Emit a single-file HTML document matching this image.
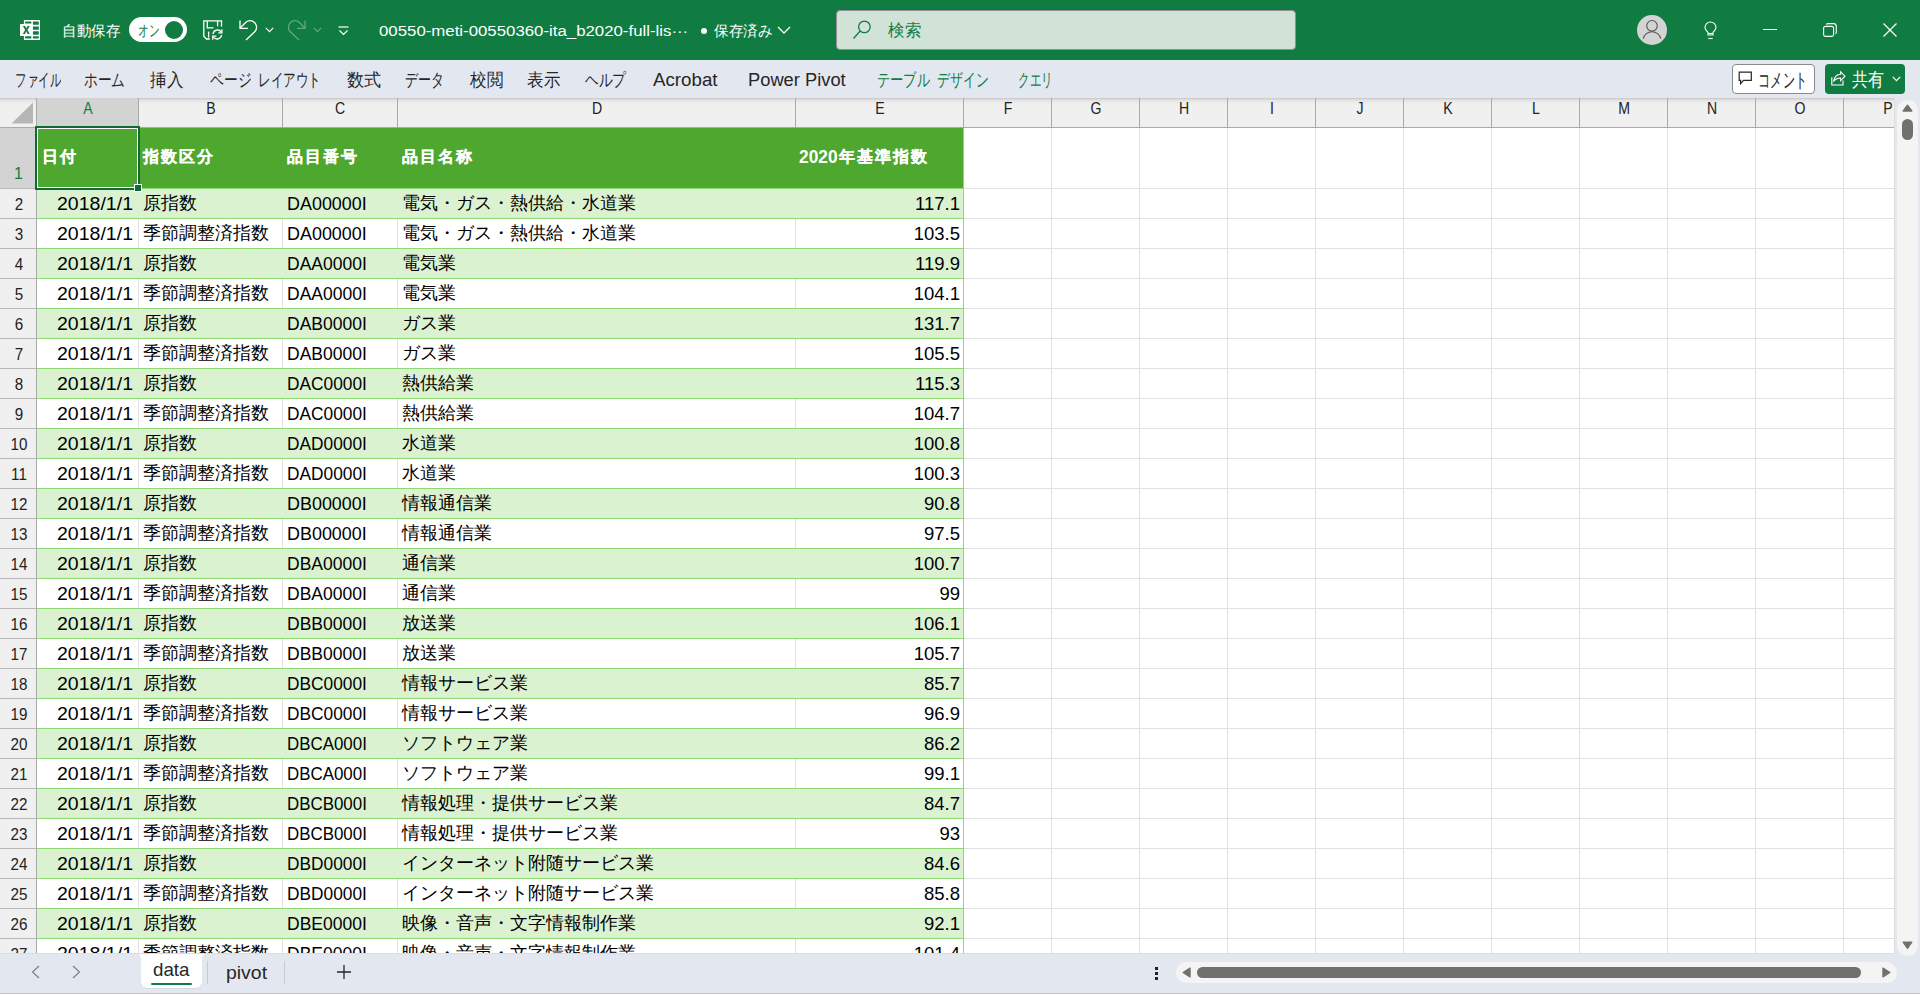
<!DOCTYPE html><html lang="ja"><head><meta charset="utf-8"><style>
html,body{margin:0;padding:0;width:1920px;height:995px;overflow:hidden;background:#fff;font-family:"Liberation Sans",sans-serif;}
.t{position:absolute;line-height:0;white-space:nowrap;}
.r{position:absolute;}
svg{position:absolute;overflow:visible;}
</style></head><body>
<div class="r" style="left:0px;top:0px;width:1920px;height:60px;background:#107C41;"></div>
<svg style="left:20px;top:20px" width="20" height="20" viewBox="0 0 20 20">
<rect x="3.9" y="0" width="16.1" height="20" rx="0.6" fill="#fff"/>
<g fill="#107C41">
<rect x="5.1" y="1.4" width="6.3" height="2.2" rx="0.4"/><rect x="5.1" y="16.3" width="6.3" height="2.2" rx="0.4"/>
<rect x="12.9" y="1.4" width="5.9" height="3.3" rx="0.4"/><rect x="12.9" y="6.4" width="5.9" height="3.4" rx="0.4"/>
<rect x="12.9" y="11.3" width="5.9" height="3.4" rx="0.4"/><rect x="12.9" y="16.3" width="5.9" height="2.2" rx="0.4"/>
</g>
<rect x="0" y="4" width="12.3" height="12" rx="0.5" fill="#fff"/>
<path d="M2.9 6 H5.1 L6.3 8.5 L7.5 6 H9.7 L7.5 9.9 L9.8 13.9 H7.6 L6.3 11.3 L5 13.9 H2.8 L5.1 9.9 Z" fill="#107C41"/>
</svg>
<div class="t" style="left:62.00px;top:30.80px;font-size:15.00px;color:#fff;font-weight:normal;font-family:'Liberation Sans', sans-serif;transform:scaleX(0.9667);transform-origin:left;">自動保存</div>
<div class="r" style="left:129px;top:17px;width:58px;height:25px;background:#fff;border-radius:12.5px;"></div>
<div class="r" style="left:165px;top:21px;width:18px;height:18px;background:#107C41;border-radius:50%;"></div>
<div class="t" style="left:137.50px;top:31.13px;font-size:15.50px;color:#107C41;font-weight:normal;font-family:'Liberation Sans', sans-serif;transform:scaleX(0.6719);transform-origin:left;">オン</div>
<svg style="left:203px;top:20px" width="20" height="20" viewBox="0 0 20 20" fill="none" stroke="#fff" stroke-width="1.3">
<path d="M6.8 19 H3.4 L0.8 16.3 V0.8 H18.5 V6.8"/>
<path d="M4.3 1 V7.9 H10.5"/><path d="M14.6 1 V6.3"/><path d="M5.6 11.6 V17.6"/>
<path d="M10 14 A4.6 4.6 0 0 1 18.2 11.8"/><path d="M18.9 9.3 V12.9 H15.3" stroke-linejoin="miter"/>
<path d="M18.6 15 A4.6 4.6 0 0 1 10.4 17.2"/><path d="M9.7 19.7 V16.1 H13.3" stroke-linejoin="miter"/>
</svg>
<svg style="left:238px;top:20px" width="20" height="21" viewBox="0 0 20 21" fill="none" stroke="#fff" stroke-width="1.35">
<path d="M2 0.4 V8.3 H9.9"/><path d="M2.4 7.9 L7.3 2.8 A6.5 6.5 0 0 1 16.9 11.6 L8 19.9"/>
</svg>
<svg style="left:265px;top:27px" width="9" height="6" viewBox="0 0 9 6" fill="none" stroke="#fff" stroke-width="1.2"><path d="M0.8 0.8 L4.5 4.6 L8.2 0.8"/></svg>
<svg style="left:287px;top:20px" width="20" height="21" viewBox="0 0 20 21" fill="none" stroke="#5FA982" stroke-width="1.35">
<path d="M18 0.4 V8.3 H10.1"/><path d="M17.6 7.9 L12.7 2.8 A6.5 6.5 0 0 0 3.1 11.6 L12 19.9"/>
</svg>
<svg style="left:313px;top:27px" width="9" height="6" viewBox="0 0 9 6" fill="none" stroke="#5FA982" stroke-width="1.2"><path d="M0.8 0.8 L4.5 4.6 L8.2 0.8"/></svg>
<svg style="left:338px;top:26px" width="11" height="10" viewBox="0 0 11 10" fill="none" stroke="#fff" stroke-width="1.2"><path d="M0.5 1 H10.5"/><path d="M1.5 4.5 L5.5 8.5 L9.5 4.5"/></svg>
<div class="t" style="left:379.00px;top:30.83px;font-size:15.50px;color:#fff;font-weight:normal;font-family:'Liberation Sans', sans-serif;transform:scaleX(1.0842);transform-origin:left;">00550-meti-00550360-ita_b2020-full-lis···</div>
<div class="r" style="left:701px;top:27.5px;width:6px;height:6px;background:#fff;border-radius:50%;"></div>
<div class="t" style="left:714.00px;top:30.80px;font-size:15.00px;color:#fff;font-weight:normal;font-family:'Liberation Sans', sans-serif;transform:scaleX(0.9667);transform-origin:left;">保存済み</div>
<svg style="left:777px;top:26px" width="14" height="8" viewBox="0 0 14 8" fill="none" stroke="#fff" stroke-width="1.3"><path d="M1 1 L7 7 L13 1"/></svg>
<div class="r" style="left:836px;top:10px;width:460px;height:40px;background:#D1E3D7;box-sizing:border-box;border:1px solid #938C99;border-radius:4px;"></div>
<svg style="left:852px;top:20px" width="20" height="20" viewBox="0 0 20 20" fill="none" stroke="#107C41" stroke-width="1.3"><circle cx="12.4" cy="6.9" r="5.8"/><path d="M8.2 11 L1.5 18.5"/></svg>
<div class="t" style="left:888.00px;top:30.28px;font-size:16.50px;color:#107C41;font-weight:normal;font-family:'Liberation Sans', sans-serif;transform:scaleX(0.9706);transform-origin:left;">検索</div>
<div class="r" style="left:1637px;top:15px;width:30px;height:30px;background:#D4D4D4;border-radius:50%;"></div>
<svg style="left:1642px;top:20px" width="20" height="20" viewBox="0 0 20 20" fill="none" stroke="#555" stroke-width="1.1"><circle cx="10" cy="5.8" r="5.3"/><path d="M1.3 18.7 A8.9 8.9 0 0 1 18.7 18.7"/></svg>
<svg style="left:1704px;top:22px" width="13" height="18" viewBox="0 0 13 18" fill="none" stroke="#fff" stroke-width="1.1"><path d="M4 13 V10.6 C3 9 1 7.8 1 5.5 A5.5 5.5 0 0 1 12 5.5 C12 7.8 10 9 9 10.6 V13 Z"/><path d="M4.3 16.5 H8.7"/><path d="M4.2 11.5 H8.8"/></svg>
<div class="r" style="left:1763px;top:28.5px;width:14px;height:1.3px;background:#fff;"></div>
<svg style="left:1823px;top:23px" width="14" height="14" viewBox="0 0 14 14" fill="none" stroke="#fff" stroke-width="1.1"><rect x="0.6" y="3.4" width="10" height="10" rx="1.8"/><path d="M3.2 1.5 C3.7 0.9 4.3 0.6 5 0.6 H10.5 A2.8 2.8 0 0 1 13.3 3.4 V9 C13.3 9.7 13 10.3 12.5 10.8"/></svg>
<svg style="left:1883px;top:23px" width="14" height="14" viewBox="0 0 14 14" fill="none" stroke="#fff" stroke-width="1.2"><path d="M0.5 0.5 L13.5 13.5 M13.5 0.5 L0.5 13.5"/></svg>
<div class="r" style="left:0px;top:60px;width:1920px;height:38px;background:#E3E8F0;"></div>
<div class="t" style="left:15.00px;top:80.26px;font-size:18.00px;color:#262626;font-weight:normal;font-family:'Liberation Sans', sans-serif;transform:scaleX(0.6389);transform-origin:left;">ファイル</div>
<div class="t" style="left:84.00px;top:80.26px;font-size:18.00px;color:#262626;font-weight:normal;font-family:'Liberation Sans', sans-serif;transform:scaleX(0.7593);transform-origin:left;">ホーム</div>
<div class="t" style="left:150.00px;top:80.26px;font-size:18.00px;color:#262626;font-weight:normal;font-family:'Liberation Sans', sans-serif;transform:scaleX(0.9167);transform-origin:left;">挿入</div>
<div class="t" style="left:210.00px;top:80.26px;font-size:18.00px;color:#262626;font-weight:normal;font-family:'Liberation Sans', sans-serif;transform:scaleX(0.7639);transform-origin:left;">ページ</div>
<div class="t" style="left:258.00px;top:80.26px;font-size:18.00px;color:#262626;font-weight:normal;font-family:'Liberation Sans', sans-serif;transform:scaleX(0.7000);transform-origin:left;">レイアウト</div>
<div class="t" style="left:347.00px;top:80.26px;font-size:18.00px;color:#262626;font-weight:normal;font-family:'Liberation Sans', sans-serif;transform:scaleX(0.9444);transform-origin:left;">数式</div>
<div class="t" style="left:405.00px;top:80.26px;font-size:18.00px;color:#262626;font-weight:normal;font-family:'Liberation Sans', sans-serif;transform:scaleX(0.7222);transform-origin:left;">データ</div>
<div class="t" style="left:470.00px;top:80.26px;font-size:18.00px;color:#262626;font-weight:normal;font-family:'Liberation Sans', sans-serif;transform:scaleX(0.9167);transform-origin:left;">校閲</div>
<div class="t" style="left:527.00px;top:80.26px;font-size:18.00px;color:#262626;font-weight:normal;font-family:'Liberation Sans', sans-serif;transform:scaleX(0.9167);transform-origin:left;">表示</div>
<div class="t" style="left:585.00px;top:80.26px;font-size:18.00px;color:#262626;font-weight:normal;font-family:'Liberation Sans', sans-serif;transform:scaleX(0.7593);transform-origin:left;">ヘルプ</div>
<div class="t" style="left:653.00px;top:80.26px;font-size:18.00px;color:#262626;font-weight:normal;font-family:'Liberation Sans', sans-serif;transform:scaleX(1.0403);transform-origin:left;">Acrobat</div>
<div class="t" style="left:748.00px;top:80.26px;font-size:18.00px;color:#262626;font-weight:normal;font-family:'Liberation Sans', sans-serif;transform:scaleX(1.0167);transform-origin:left;">Power Pivot</div>
<div class="t" style="left:877.00px;top:80.26px;font-size:18.00px;color:#107C41;font-weight:normal;font-family:'Liberation Sans', sans-serif;transform:scaleX(0.7361);transform-origin:left;">テーブル</div>
<div class="t" style="left:937.00px;top:80.26px;font-size:18.00px;color:#107C41;font-weight:normal;font-family:'Liberation Sans', sans-serif;transform:scaleX(0.7188);transform-origin:left;">デザイン</div>
<div class="t" style="left:1018.00px;top:80.26px;font-size:18.00px;color:#107C41;font-weight:normal;font-family:'Liberation Sans', sans-serif;transform:scaleX(0.6389);transform-origin:left;">クエリ</div>
<div class="r" style="left:1732px;top:64px;width:83px;height:30px;background:#fff;box-sizing:border-box;border:1px solid #8A8A8A;border-radius:4px;"></div>
<svg style="left:1738px;top:71px" width="15" height="15" viewBox="0 0 15 15" fill="none" stroke="#262626" stroke-width="1.2"><path d="M1.2 1.2 H13.3 V9.3 H5.5 L2.6 12.6 V9.3 H1.2 Z"/></svg>
<div class="t" style="left:1758.00px;top:79.74px;font-size:19.50px;color:#262626;font-weight:normal;font-family:'Liberation Sans', sans-serif;transform:scaleX(0.6125);transform-origin:left;">コメント</div>
<div class="r" style="left:1825px;top:64px;width:80px;height:30px;background:#107C41;border-radius:4px;"></div>
<svg style="left:1831px;top:71px" width="15" height="15" viewBox="0 0 15 15" fill="none" stroke="#fff" stroke-width="1.1" stroke-linejoin="miter"><path d="M0.8 6.3 V14 H12 V9.6"/><path d="M2.8 9.8 C3.5 5.5 6 3.5 9.6 3.3 V0.8 L14 5.2 L9.6 9.6 V7 C6.5 7 4.5 8 2.8 9.8 Z"/></svg>
<div class="t" style="left:1852.00px;top:80.39px;font-size:18.50px;color:#fff;font-weight:normal;font-family:'Liberation Sans', sans-serif;transform:scaleX(0.8421);transform-origin:left;">共有</div>
<svg style="left:1892px;top:76px" width="9" height="6" viewBox="0 0 9 6" fill="none" stroke="#fff" stroke-width="1.2"><path d="M0.8 0.8 L4.5 4.6 L8.2 0.8"/></svg>
<div class="r" style="left:0px;top:98px;width:1894px;height:30px;background:#F0F0F0;"></div>
<div class="r" style="left:0px;top:98px;width:1894px;height:6px;background:linear-gradient(#C8C8C8,#E4E4E4 40%,#F0F0F0);"></div>
<div class="r" style="left:37px;top:98px;width:101px;height:29px;background:#D3D3D3;"></div>
<div class="r" style="left:0px;top:127px;width:1894px;height:1px;background:#A9A9A9;"></div>
<svg style="left:11px;top:102px" width="23" height="22" viewBox="0 0 23 22"><path d="M0.5 21.5 L22 21.5 L22 0.5 Z" fill="#B6B6B6"/></svg>
<div class="r" style="left:36px;top:98px;width:1px;height:30px;background:#A9A9A9;"></div>
<div class="r" style="left:138px;top:98px;width:1px;height:29px;background:#A9A9A9;"></div>
<div class="r" style="left:282px;top:98px;width:1px;height:29px;background:#A9A9A9;"></div>
<div class="r" style="left:397px;top:98px;width:1px;height:29px;background:#A9A9A9;"></div>
<div class="r" style="left:795px;top:98px;width:1px;height:29px;background:#A9A9A9;"></div>
<div class="r" style="left:963px;top:98px;width:1px;height:29px;background:#A9A9A9;"></div>
<div class="r" style="left:1051px;top:98px;width:1px;height:29px;background:#A9A9A9;"></div>
<div class="r" style="left:1139px;top:98px;width:1px;height:29px;background:#A9A9A9;"></div>
<div class="r" style="left:1227px;top:98px;width:1px;height:29px;background:#A9A9A9;"></div>
<div class="r" style="left:1315px;top:98px;width:1px;height:29px;background:#A9A9A9;"></div>
<div class="r" style="left:1403px;top:98px;width:1px;height:29px;background:#A9A9A9;"></div>
<div class="r" style="left:1491px;top:98px;width:1px;height:29px;background:#A9A9A9;"></div>
<div class="r" style="left:1579px;top:98px;width:1px;height:29px;background:#A9A9A9;"></div>
<div class="r" style="left:1667px;top:98px;width:1px;height:29px;background:#A9A9A9;"></div>
<div class="r" style="left:1755px;top:98px;width:1px;height:29px;background:#A9A9A9;"></div>
<div class="r" style="left:1843px;top:98px;width:1px;height:29px;background:#A9A9A9;"></div>
<div class="r" style="left:1931px;top:98px;width:1px;height:29px;background:#A9A9A9;"></div>
<div class="t" style="left:87.50px;top:109.46px;font-size:16.00px;color:#107C41;font-weight:normal;font-family:'Liberation Sans', sans-serif;transform:translateX(-50%) scaleX(0.880);">A</div>
<div class="t" style="left:210.50px;top:109.46px;font-size:16.00px;color:#222;font-weight:normal;font-family:'Liberation Sans', sans-serif;transform:translateX(-50%) scaleX(0.880);">B</div>
<div class="t" style="left:340.00px;top:109.46px;font-size:16.00px;color:#222;font-weight:normal;font-family:'Liberation Sans', sans-serif;transform:translateX(-50%) scaleX(0.880);">C</div>
<div class="t" style="left:596.50px;top:109.46px;font-size:16.00px;color:#222;font-weight:normal;font-family:'Liberation Sans', sans-serif;transform:translateX(-50%) scaleX(0.880);">D</div>
<div class="t" style="left:879.50px;top:109.46px;font-size:16.00px;color:#222;font-weight:normal;font-family:'Liberation Sans', sans-serif;transform:translateX(-50%) scaleX(0.880);">E</div>
<div class="t" style="left:1007.50px;top:109.46px;font-size:16.00px;color:#222;font-weight:normal;font-family:'Liberation Sans', sans-serif;transform:translateX(-50%) scaleX(0.880);">F</div>
<div class="t" style="left:1095.50px;top:109.46px;font-size:16.00px;color:#222;font-weight:normal;font-family:'Liberation Sans', sans-serif;transform:translateX(-50%) scaleX(0.880);">G</div>
<div class="t" style="left:1183.50px;top:109.46px;font-size:16.00px;color:#222;font-weight:normal;font-family:'Liberation Sans', sans-serif;transform:translateX(-50%) scaleX(0.880);">H</div>
<div class="t" style="left:1271.50px;top:109.46px;font-size:16.00px;color:#222;font-weight:normal;font-family:'Liberation Sans', sans-serif;transform:translateX(-50%) scaleX(0.880);">I</div>
<div class="t" style="left:1359.50px;top:109.46px;font-size:16.00px;color:#222;font-weight:normal;font-family:'Liberation Sans', sans-serif;transform:translateX(-50%) scaleX(0.880);">J</div>
<div class="t" style="left:1447.50px;top:109.46px;font-size:16.00px;color:#222;font-weight:normal;font-family:'Liberation Sans', sans-serif;transform:translateX(-50%) scaleX(0.880);">K</div>
<div class="t" style="left:1535.50px;top:109.46px;font-size:16.00px;color:#222;font-weight:normal;font-family:'Liberation Sans', sans-serif;transform:translateX(-50%) scaleX(0.880);">L</div>
<div class="t" style="left:1623.50px;top:109.46px;font-size:16.00px;color:#222;font-weight:normal;font-family:'Liberation Sans', sans-serif;transform:translateX(-50%) scaleX(0.880);">M</div>
<div class="t" style="left:1711.50px;top:109.46px;font-size:16.00px;color:#222;font-weight:normal;font-family:'Liberation Sans', sans-serif;transform:translateX(-50%) scaleX(0.880);">N</div>
<div class="t" style="left:1799.50px;top:109.46px;font-size:16.00px;color:#222;font-weight:normal;font-family:'Liberation Sans', sans-serif;transform:translateX(-50%) scaleX(0.880);">O</div>
<div class="t" style="left:1887.50px;top:109.46px;font-size:16.00px;color:#222;font-weight:normal;font-family:'Liberation Sans', sans-serif;transform:translateX(-50%) scaleX(0.880);">P</div>
<div class="r" style="left:0px;top:128px;width:36px;height:825px;background:#F0F0F0;"></div>
<div class="r" style="left:36px;top:128px;width:1px;height:825px;background:#A9A9A9;"></div>
<div class="r" style="left:0px;top:128px;width:36px;height:60px;background:#D3D3D3;"></div>
<div class="r" style="left:0px;top:188px;width:36px;height:1px;background:#B8B8B8;"></div>
<div class="r" style="left:0px;top:218px;width:36px;height:1px;background:#B8B8B8;"></div>
<div class="r" style="left:0px;top:248px;width:36px;height:1px;background:#B8B8B8;"></div>
<div class="r" style="left:0px;top:278px;width:36px;height:1px;background:#B8B8B8;"></div>
<div class="r" style="left:0px;top:308px;width:36px;height:1px;background:#B8B8B8;"></div>
<div class="r" style="left:0px;top:338px;width:36px;height:1px;background:#B8B8B8;"></div>
<div class="r" style="left:0px;top:368px;width:36px;height:1px;background:#B8B8B8;"></div>
<div class="r" style="left:0px;top:398px;width:36px;height:1px;background:#B8B8B8;"></div>
<div class="r" style="left:0px;top:428px;width:36px;height:1px;background:#B8B8B8;"></div>
<div class="r" style="left:0px;top:458px;width:36px;height:1px;background:#B8B8B8;"></div>
<div class="r" style="left:0px;top:488px;width:36px;height:1px;background:#B8B8B8;"></div>
<div class="r" style="left:0px;top:518px;width:36px;height:1px;background:#B8B8B8;"></div>
<div class="r" style="left:0px;top:548px;width:36px;height:1px;background:#B8B8B8;"></div>
<div class="r" style="left:0px;top:578px;width:36px;height:1px;background:#B8B8B8;"></div>
<div class="r" style="left:0px;top:608px;width:36px;height:1px;background:#B8B8B8;"></div>
<div class="r" style="left:0px;top:638px;width:36px;height:1px;background:#B8B8B8;"></div>
<div class="r" style="left:0px;top:668px;width:36px;height:1px;background:#B8B8B8;"></div>
<div class="r" style="left:0px;top:698px;width:36px;height:1px;background:#B8B8B8;"></div>
<div class="r" style="left:0px;top:728px;width:36px;height:1px;background:#B8B8B8;"></div>
<div class="r" style="left:0px;top:758px;width:36px;height:1px;background:#B8B8B8;"></div>
<div class="r" style="left:0px;top:788px;width:36px;height:1px;background:#B8B8B8;"></div>
<div class="r" style="left:0px;top:818px;width:36px;height:1px;background:#B8B8B8;"></div>
<div class="r" style="left:0px;top:848px;width:36px;height:1px;background:#B8B8B8;"></div>
<div class="r" style="left:0px;top:878px;width:36px;height:1px;background:#B8B8B8;"></div>
<div class="r" style="left:0px;top:908px;width:36px;height:1px;background:#B8B8B8;"></div>
<div class="r" style="left:0px;top:938px;width:36px;height:1px;background:#B8B8B8;"></div>
<div class="t" style="left:18.50px;top:174.06px;font-size:16.00px;color:#107C41;font-weight:normal;font-family:'Liberation Sans', sans-serif;transform:translateX(-50%) scaleX(1.000);">1</div>
<div class="t" style="left:18.70px;top:204.66px;font-size:16.00px;color:#222;font-weight:normal;font-family:'Liberation Sans', sans-serif;transform:translateX(-50%) scaleX(0.950);">2</div>
<div class="t" style="left:18.70px;top:234.66px;font-size:16.00px;color:#222;font-weight:normal;font-family:'Liberation Sans', sans-serif;transform:translateX(-50%) scaleX(0.950);">3</div>
<div class="t" style="left:18.70px;top:264.66px;font-size:16.00px;color:#222;font-weight:normal;font-family:'Liberation Sans', sans-serif;transform:translateX(-50%) scaleX(0.950);">4</div>
<div class="t" style="left:18.70px;top:294.66px;font-size:16.00px;color:#222;font-weight:normal;font-family:'Liberation Sans', sans-serif;transform:translateX(-50%) scaleX(0.950);">5</div>
<div class="t" style="left:18.70px;top:324.66px;font-size:16.00px;color:#222;font-weight:normal;font-family:'Liberation Sans', sans-serif;transform:translateX(-50%) scaleX(0.950);">6</div>
<div class="t" style="left:18.70px;top:354.66px;font-size:16.00px;color:#222;font-weight:normal;font-family:'Liberation Sans', sans-serif;transform:translateX(-50%) scaleX(0.950);">7</div>
<div class="t" style="left:18.70px;top:384.66px;font-size:16.00px;color:#222;font-weight:normal;font-family:'Liberation Sans', sans-serif;transform:translateX(-50%) scaleX(0.950);">8</div>
<div class="t" style="left:18.70px;top:414.66px;font-size:16.00px;color:#222;font-weight:normal;font-family:'Liberation Sans', sans-serif;transform:translateX(-50%) scaleX(0.950);">9</div>
<div class="t" style="left:18.70px;top:444.66px;font-size:16.00px;color:#222;font-weight:normal;font-family:'Liberation Sans', sans-serif;transform:translateX(-50%) scaleX(0.950);">10</div>
<div class="t" style="left:18.70px;top:474.66px;font-size:16.00px;color:#222;font-weight:normal;font-family:'Liberation Sans', sans-serif;transform:translateX(-50%) scaleX(0.950);">11</div>
<div class="t" style="left:18.70px;top:504.66px;font-size:16.00px;color:#222;font-weight:normal;font-family:'Liberation Sans', sans-serif;transform:translateX(-50%) scaleX(0.950);">12</div>
<div class="t" style="left:18.70px;top:534.66px;font-size:16.00px;color:#222;font-weight:normal;font-family:'Liberation Sans', sans-serif;transform:translateX(-50%) scaleX(0.950);">13</div>
<div class="t" style="left:18.70px;top:564.66px;font-size:16.00px;color:#222;font-weight:normal;font-family:'Liberation Sans', sans-serif;transform:translateX(-50%) scaleX(0.950);">14</div>
<div class="t" style="left:18.70px;top:594.66px;font-size:16.00px;color:#222;font-weight:normal;font-family:'Liberation Sans', sans-serif;transform:translateX(-50%) scaleX(0.950);">15</div>
<div class="t" style="left:18.70px;top:624.66px;font-size:16.00px;color:#222;font-weight:normal;font-family:'Liberation Sans', sans-serif;transform:translateX(-50%) scaleX(0.950);">16</div>
<div class="t" style="left:18.70px;top:654.66px;font-size:16.00px;color:#222;font-weight:normal;font-family:'Liberation Sans', sans-serif;transform:translateX(-50%) scaleX(0.950);">17</div>
<div class="t" style="left:18.70px;top:684.66px;font-size:16.00px;color:#222;font-weight:normal;font-family:'Liberation Sans', sans-serif;transform:translateX(-50%) scaleX(0.950);">18</div>
<div class="t" style="left:18.70px;top:714.66px;font-size:16.00px;color:#222;font-weight:normal;font-family:'Liberation Sans', sans-serif;transform:translateX(-50%) scaleX(0.950);">19</div>
<div class="t" style="left:18.70px;top:744.66px;font-size:16.00px;color:#222;font-weight:normal;font-family:'Liberation Sans', sans-serif;transform:translateX(-50%) scaleX(0.950);">20</div>
<div class="t" style="left:18.70px;top:774.66px;font-size:16.00px;color:#222;font-weight:normal;font-family:'Liberation Sans', sans-serif;transform:translateX(-50%) scaleX(0.950);">21</div>
<div class="t" style="left:18.70px;top:804.66px;font-size:16.00px;color:#222;font-weight:normal;font-family:'Liberation Sans', sans-serif;transform:translateX(-50%) scaleX(0.950);">22</div>
<div class="t" style="left:18.70px;top:834.66px;font-size:16.00px;color:#222;font-weight:normal;font-family:'Liberation Sans', sans-serif;transform:translateX(-50%) scaleX(0.950);">23</div>
<div class="t" style="left:18.70px;top:864.66px;font-size:16.00px;color:#222;font-weight:normal;font-family:'Liberation Sans', sans-serif;transform:translateX(-50%) scaleX(0.950);">24</div>
<div class="t" style="left:18.70px;top:894.66px;font-size:16.00px;color:#222;font-weight:normal;font-family:'Liberation Sans', sans-serif;transform:translateX(-50%) scaleX(0.950);">25</div>
<div class="t" style="left:18.70px;top:924.66px;font-size:16.00px;color:#222;font-weight:normal;font-family:'Liberation Sans', sans-serif;transform:translateX(-50%) scaleX(0.950);">26</div>
<div class="t" style="left:18.70px;top:954.66px;font-size:16.00px;color:#222;font-weight:normal;font-family:'Liberation Sans', sans-serif;transform:translateX(-50%) scaleX(0.950);">27</div>
<div class="r" style="left:37px;top:128px;width:1857px;height:825px;background:#fff;"></div>
<div class="r" style="left:37px;top:188px;width:1857px;height:1px;background:#E1E1E1;"></div>
<div class="r" style="left:37px;top:218px;width:1857px;height:1px;background:#E1E1E1;"></div>
<div class="r" style="left:37px;top:248px;width:1857px;height:1px;background:#E1E1E1;"></div>
<div class="r" style="left:37px;top:278px;width:1857px;height:1px;background:#E1E1E1;"></div>
<div class="r" style="left:37px;top:308px;width:1857px;height:1px;background:#E1E1E1;"></div>
<div class="r" style="left:37px;top:338px;width:1857px;height:1px;background:#E1E1E1;"></div>
<div class="r" style="left:37px;top:368px;width:1857px;height:1px;background:#E1E1E1;"></div>
<div class="r" style="left:37px;top:398px;width:1857px;height:1px;background:#E1E1E1;"></div>
<div class="r" style="left:37px;top:428px;width:1857px;height:1px;background:#E1E1E1;"></div>
<div class="r" style="left:37px;top:458px;width:1857px;height:1px;background:#E1E1E1;"></div>
<div class="r" style="left:37px;top:488px;width:1857px;height:1px;background:#E1E1E1;"></div>
<div class="r" style="left:37px;top:518px;width:1857px;height:1px;background:#E1E1E1;"></div>
<div class="r" style="left:37px;top:548px;width:1857px;height:1px;background:#E1E1E1;"></div>
<div class="r" style="left:37px;top:578px;width:1857px;height:1px;background:#E1E1E1;"></div>
<div class="r" style="left:37px;top:608px;width:1857px;height:1px;background:#E1E1E1;"></div>
<div class="r" style="left:37px;top:638px;width:1857px;height:1px;background:#E1E1E1;"></div>
<div class="r" style="left:37px;top:668px;width:1857px;height:1px;background:#E1E1E1;"></div>
<div class="r" style="left:37px;top:698px;width:1857px;height:1px;background:#E1E1E1;"></div>
<div class="r" style="left:37px;top:728px;width:1857px;height:1px;background:#E1E1E1;"></div>
<div class="r" style="left:37px;top:758px;width:1857px;height:1px;background:#E1E1E1;"></div>
<div class="r" style="left:37px;top:788px;width:1857px;height:1px;background:#E1E1E1;"></div>
<div class="r" style="left:37px;top:818px;width:1857px;height:1px;background:#E1E1E1;"></div>
<div class="r" style="left:37px;top:848px;width:1857px;height:1px;background:#E1E1E1;"></div>
<div class="r" style="left:37px;top:878px;width:1857px;height:1px;background:#E1E1E1;"></div>
<div class="r" style="left:37px;top:908px;width:1857px;height:1px;background:#E1E1E1;"></div>
<div class="r" style="left:37px;top:938px;width:1857px;height:1px;background:#E1E1E1;"></div>
<div class="r" style="left:138px;top:128px;width:1px;height:825px;background:#E1E1E1;"></div>
<div class="r" style="left:282px;top:128px;width:1px;height:825px;background:#E1E1E1;"></div>
<div class="r" style="left:397px;top:128px;width:1px;height:825px;background:#E1E1E1;"></div>
<div class="r" style="left:795px;top:128px;width:1px;height:825px;background:#E1E1E1;"></div>
<div class="r" style="left:963px;top:128px;width:1px;height:825px;background:#E1E1E1;"></div>
<div class="r" style="left:1051px;top:128px;width:1px;height:825px;background:#E1E1E1;"></div>
<div class="r" style="left:1139px;top:128px;width:1px;height:825px;background:#E1E1E1;"></div>
<div class="r" style="left:1227px;top:128px;width:1px;height:825px;background:#E1E1E1;"></div>
<div class="r" style="left:1315px;top:128px;width:1px;height:825px;background:#E1E1E1;"></div>
<div class="r" style="left:1403px;top:128px;width:1px;height:825px;background:#E1E1E1;"></div>
<div class="r" style="left:1491px;top:128px;width:1px;height:825px;background:#E1E1E1;"></div>
<div class="r" style="left:1579px;top:128px;width:1px;height:825px;background:#E1E1E1;"></div>
<div class="r" style="left:1667px;top:128px;width:1px;height:825px;background:#E1E1E1;"></div>
<div class="r" style="left:1755px;top:128px;width:1px;height:825px;background:#E1E1E1;"></div>
<div class="r" style="left:1843px;top:128px;width:1px;height:825px;background:#E1E1E1;"></div>
<div class="r" style="left:37px;top:128px;width:926px;height:60px;background:#4EA72E;"></div>
<div class="r" style="left:37px;top:188px;width:926px;height:30px;background:#DAF2D0;"></div>
<div class="r" style="left:37px;top:188px;width:927px;height:1px;background:#8ED973;"></div>
<div class="r" style="left:37px;top:218px;width:927px;height:1px;background:#8ED973;"></div>
<div class="r" style="left:37px;top:248px;width:926px;height:30px;background:#DAF2D0;"></div>
<div class="r" style="left:37px;top:248px;width:927px;height:1px;background:#8ED973;"></div>
<div class="r" style="left:37px;top:278px;width:927px;height:1px;background:#8ED973;"></div>
<div class="r" style="left:37px;top:308px;width:926px;height:30px;background:#DAF2D0;"></div>
<div class="r" style="left:37px;top:308px;width:927px;height:1px;background:#8ED973;"></div>
<div class="r" style="left:37px;top:338px;width:927px;height:1px;background:#8ED973;"></div>
<div class="r" style="left:37px;top:368px;width:926px;height:30px;background:#DAF2D0;"></div>
<div class="r" style="left:37px;top:368px;width:927px;height:1px;background:#8ED973;"></div>
<div class="r" style="left:37px;top:398px;width:927px;height:1px;background:#8ED973;"></div>
<div class="r" style="left:37px;top:428px;width:926px;height:30px;background:#DAF2D0;"></div>
<div class="r" style="left:37px;top:428px;width:927px;height:1px;background:#8ED973;"></div>
<div class="r" style="left:37px;top:458px;width:927px;height:1px;background:#8ED973;"></div>
<div class="r" style="left:37px;top:488px;width:926px;height:30px;background:#DAF2D0;"></div>
<div class="r" style="left:37px;top:488px;width:927px;height:1px;background:#8ED973;"></div>
<div class="r" style="left:37px;top:518px;width:927px;height:1px;background:#8ED973;"></div>
<div class="r" style="left:37px;top:548px;width:926px;height:30px;background:#DAF2D0;"></div>
<div class="r" style="left:37px;top:548px;width:927px;height:1px;background:#8ED973;"></div>
<div class="r" style="left:37px;top:578px;width:927px;height:1px;background:#8ED973;"></div>
<div class="r" style="left:37px;top:608px;width:926px;height:30px;background:#DAF2D0;"></div>
<div class="r" style="left:37px;top:608px;width:927px;height:1px;background:#8ED973;"></div>
<div class="r" style="left:37px;top:638px;width:927px;height:1px;background:#8ED973;"></div>
<div class="r" style="left:37px;top:668px;width:926px;height:30px;background:#DAF2D0;"></div>
<div class="r" style="left:37px;top:668px;width:927px;height:1px;background:#8ED973;"></div>
<div class="r" style="left:37px;top:698px;width:927px;height:1px;background:#8ED973;"></div>
<div class="r" style="left:37px;top:728px;width:926px;height:30px;background:#DAF2D0;"></div>
<div class="r" style="left:37px;top:728px;width:927px;height:1px;background:#8ED973;"></div>
<div class="r" style="left:37px;top:758px;width:927px;height:1px;background:#8ED973;"></div>
<div class="r" style="left:37px;top:788px;width:926px;height:30px;background:#DAF2D0;"></div>
<div class="r" style="left:37px;top:788px;width:927px;height:1px;background:#8ED973;"></div>
<div class="r" style="left:37px;top:818px;width:927px;height:1px;background:#8ED973;"></div>
<div class="r" style="left:37px;top:848px;width:926px;height:30px;background:#DAF2D0;"></div>
<div class="r" style="left:37px;top:848px;width:927px;height:1px;background:#8ED973;"></div>
<div class="r" style="left:37px;top:878px;width:927px;height:1px;background:#8ED973;"></div>
<div class="r" style="left:37px;top:908px;width:926px;height:30px;background:#DAF2D0;"></div>
<div class="r" style="left:37px;top:908px;width:927px;height:1px;background:#8ED973;"></div>
<div class="r" style="left:37px;top:938px;width:927px;height:1px;background:#8ED973;"></div>
<div class="r" style="left:963px;top:128px;width:1px;height:825px;background:#8ED973;"></div>
<div class="t" style="left:42.25px;top:157.46px;font-size:16.00px;color:#fff;font-weight:bold;font-family:'Liberation Sans', sans-serif;-webkit-text-stroke:0.2px #fff;letter-spacing:2px;">日付</div>
<div class="t" style="left:143.00px;top:157.46px;font-size:16.00px;color:#fff;font-weight:bold;font-family:'Liberation Sans', sans-serif;-webkit-text-stroke:0.2px #fff;letter-spacing:2px;">指数区分</div>
<div class="t" style="left:287.25px;top:157.46px;font-size:16.00px;color:#fff;font-weight:bold;font-family:'Liberation Sans', sans-serif;-webkit-text-stroke:0.2px #fff;letter-spacing:2px;">品目番号</div>
<div class="t" style="left:402.25px;top:157.46px;font-size:16.00px;color:#fff;font-weight:bold;font-family:'Liberation Sans', sans-serif;-webkit-text-stroke:0.2px #fff;letter-spacing:2px;">品目名称</div>
<div class="t" style="left:799.30px;top:157.26px;font-size:18.00px;color:#fff;font-weight:bold;font-family:'Liberation Sans', sans-serif;transform:scaleX(0.9625);transform-origin:left;">2020</div>
<div class="t" style="left:838.50px;top:157.46px;font-size:16.00px;color:#fff;font-weight:bold;font-family:'Liberation Sans', sans-serif;-webkit-text-stroke:0.2px #fff;letter-spacing:2px;">年基準指数</div>
<div style="position:absolute;left:0;top:0;width:1894px;height:953px;overflow:hidden">
<div class="t" style="right:1760.50px;top:203.59px;font-size:18.50px;color:#000;font-weight:normal;font-family:'Liberation Sans', sans-serif;transform:scaleX(1.0556);transform-origin:right;">2018/1/1</div>
<div class="t" style="left:143.00px;top:203.30px;font-size:17.90px;color:#000;font-weight:normal;font-family:'Liberation Sans', sans-serif;">原指数</div>
<div class="t" style="left:287.25px;top:203.59px;font-size:18.50px;color:#000;font-weight:normal;font-family:'Liberation Sans', sans-serif;transform:scaleX(0.9695);transform-origin:left;">DA00000I</div>
<div class="t" style="left:402.25px;top:203.30px;font-size:17.90px;color:#000;font-weight:normal;font-family:'Liberation Sans', sans-serif;">電気・ガス・熱供給・水道業</div>
<div class="t" style="right:934.00px;top:203.59px;font-size:18.50px;color:#000;font-weight:normal;font-family:'Liberation Sans', sans-serif;">117.1</div>
<div class="t" style="right:1760.50px;top:233.59px;font-size:18.50px;color:#000;font-weight:normal;font-family:'Liberation Sans', sans-serif;transform:scaleX(1.0556);transform-origin:right;">2018/1/1</div>
<div class="t" style="left:143.00px;top:233.30px;font-size:17.90px;color:#000;font-weight:normal;font-family:'Liberation Sans', sans-serif;">季節調整済指数</div>
<div class="t" style="left:287.25px;top:233.59px;font-size:18.50px;color:#000;font-weight:normal;font-family:'Liberation Sans', sans-serif;transform:scaleX(0.9695);transform-origin:left;">DA00000I</div>
<div class="t" style="left:402.25px;top:233.30px;font-size:17.90px;color:#000;font-weight:normal;font-family:'Liberation Sans', sans-serif;">電気・ガス・熱供給・水道業</div>
<div class="t" style="right:934.00px;top:233.59px;font-size:18.50px;color:#000;font-weight:normal;font-family:'Liberation Sans', sans-serif;">103.5</div>
<div class="t" style="right:1760.50px;top:263.59px;font-size:18.50px;color:#000;font-weight:normal;font-family:'Liberation Sans', sans-serif;transform:scaleX(1.0556);transform-origin:right;">2018/1/1</div>
<div class="t" style="left:143.00px;top:263.30px;font-size:17.90px;color:#000;font-weight:normal;font-family:'Liberation Sans', sans-serif;">原指数</div>
<div class="t" style="left:287.25px;top:263.59px;font-size:18.50px;color:#000;font-weight:normal;font-family:'Liberation Sans', sans-serif;transform:scaleX(0.9464);transform-origin:left;">DAA0000I</div>
<div class="t" style="left:402.25px;top:263.30px;font-size:17.90px;color:#000;font-weight:normal;font-family:'Liberation Sans', sans-serif;">電気業</div>
<div class="t" style="right:934.00px;top:263.59px;font-size:18.50px;color:#000;font-weight:normal;font-family:'Liberation Sans', sans-serif;">119.9</div>
<div class="t" style="right:1760.50px;top:293.59px;font-size:18.50px;color:#000;font-weight:normal;font-family:'Liberation Sans', sans-serif;transform:scaleX(1.0556);transform-origin:right;">2018/1/1</div>
<div class="t" style="left:143.00px;top:293.30px;font-size:17.90px;color:#000;font-weight:normal;font-family:'Liberation Sans', sans-serif;">季節調整済指数</div>
<div class="t" style="left:287.25px;top:293.59px;font-size:18.50px;color:#000;font-weight:normal;font-family:'Liberation Sans', sans-serif;transform:scaleX(0.9464);transform-origin:left;">DAA0000I</div>
<div class="t" style="left:402.25px;top:293.30px;font-size:17.90px;color:#000;font-weight:normal;font-family:'Liberation Sans', sans-serif;">電気業</div>
<div class="t" style="right:934.00px;top:293.59px;font-size:18.50px;color:#000;font-weight:normal;font-family:'Liberation Sans', sans-serif;">104.1</div>
<div class="t" style="right:1760.50px;top:323.59px;font-size:18.50px;color:#000;font-weight:normal;font-family:'Liberation Sans', sans-serif;transform:scaleX(1.0556);transform-origin:right;">2018/1/1</div>
<div class="t" style="left:143.00px;top:323.30px;font-size:17.90px;color:#000;font-weight:normal;font-family:'Liberation Sans', sans-serif;">原指数</div>
<div class="t" style="left:287.25px;top:323.59px;font-size:18.50px;color:#000;font-weight:normal;font-family:'Liberation Sans', sans-serif;transform:scaleX(0.9464);transform-origin:left;">DAB0000I</div>
<div class="t" style="left:402.25px;top:323.30px;font-size:17.90px;color:#000;font-weight:normal;font-family:'Liberation Sans', sans-serif;">ガス業</div>
<div class="t" style="right:934.00px;top:323.59px;font-size:18.50px;color:#000;font-weight:normal;font-family:'Liberation Sans', sans-serif;">131.7</div>
<div class="t" style="right:1760.50px;top:353.59px;font-size:18.50px;color:#000;font-weight:normal;font-family:'Liberation Sans', sans-serif;transform:scaleX(1.0556);transform-origin:right;">2018/1/1</div>
<div class="t" style="left:143.00px;top:353.30px;font-size:17.90px;color:#000;font-weight:normal;font-family:'Liberation Sans', sans-serif;">季節調整済指数</div>
<div class="t" style="left:287.25px;top:353.59px;font-size:18.50px;color:#000;font-weight:normal;font-family:'Liberation Sans', sans-serif;transform:scaleX(0.9464);transform-origin:left;">DAB0000I</div>
<div class="t" style="left:402.25px;top:353.30px;font-size:17.90px;color:#000;font-weight:normal;font-family:'Liberation Sans', sans-serif;">ガス業</div>
<div class="t" style="right:934.00px;top:353.59px;font-size:18.50px;color:#000;font-weight:normal;font-family:'Liberation Sans', sans-serif;">105.5</div>
<div class="t" style="right:1760.50px;top:383.59px;font-size:18.50px;color:#000;font-weight:normal;font-family:'Liberation Sans', sans-serif;transform:scaleX(1.0556);transform-origin:right;">2018/1/1</div>
<div class="t" style="left:143.00px;top:383.30px;font-size:17.90px;color:#000;font-weight:normal;font-family:'Liberation Sans', sans-serif;">原指数</div>
<div class="t" style="left:287.25px;top:383.59px;font-size:18.50px;color:#000;font-weight:normal;font-family:'Liberation Sans', sans-serif;transform:scaleX(0.9353);transform-origin:left;">DAC0000I</div>
<div class="t" style="left:402.25px;top:383.30px;font-size:17.90px;color:#000;font-weight:normal;font-family:'Liberation Sans', sans-serif;">熱供給業</div>
<div class="t" style="right:934.00px;top:383.59px;font-size:18.50px;color:#000;font-weight:normal;font-family:'Liberation Sans', sans-serif;">115.3</div>
<div class="t" style="right:1760.50px;top:413.59px;font-size:18.50px;color:#000;font-weight:normal;font-family:'Liberation Sans', sans-serif;transform:scaleX(1.0556);transform-origin:right;">2018/1/1</div>
<div class="t" style="left:143.00px;top:413.30px;font-size:17.90px;color:#000;font-weight:normal;font-family:'Liberation Sans', sans-serif;">季節調整済指数</div>
<div class="t" style="left:287.25px;top:413.59px;font-size:18.50px;color:#000;font-weight:normal;font-family:'Liberation Sans', sans-serif;transform:scaleX(0.9353);transform-origin:left;">DAC0000I</div>
<div class="t" style="left:402.25px;top:413.30px;font-size:17.90px;color:#000;font-weight:normal;font-family:'Liberation Sans', sans-serif;">熱供給業</div>
<div class="t" style="right:934.00px;top:413.59px;font-size:18.50px;color:#000;font-weight:normal;font-family:'Liberation Sans', sans-serif;">104.7</div>
<div class="t" style="right:1760.50px;top:443.59px;font-size:18.50px;color:#000;font-weight:normal;font-family:'Liberation Sans', sans-serif;transform:scaleX(1.0556);transform-origin:right;">2018/1/1</div>
<div class="t" style="left:143.00px;top:443.30px;font-size:17.90px;color:#000;font-weight:normal;font-family:'Liberation Sans', sans-serif;">原指数</div>
<div class="t" style="left:287.25px;top:443.59px;font-size:18.50px;color:#000;font-weight:normal;font-family:'Liberation Sans', sans-serif;transform:scaleX(0.9353);transform-origin:left;">DAD0000I</div>
<div class="t" style="left:402.25px;top:443.30px;font-size:17.90px;color:#000;font-weight:normal;font-family:'Liberation Sans', sans-serif;">水道業</div>
<div class="t" style="right:934.00px;top:443.59px;font-size:18.50px;color:#000;font-weight:normal;font-family:'Liberation Sans', sans-serif;">100.8</div>
<div class="t" style="right:1760.50px;top:473.59px;font-size:18.50px;color:#000;font-weight:normal;font-family:'Liberation Sans', sans-serif;transform:scaleX(1.0556);transform-origin:right;">2018/1/1</div>
<div class="t" style="left:143.00px;top:473.30px;font-size:17.90px;color:#000;font-weight:normal;font-family:'Liberation Sans', sans-serif;">季節調整済指数</div>
<div class="t" style="left:287.25px;top:473.59px;font-size:18.50px;color:#000;font-weight:normal;font-family:'Liberation Sans', sans-serif;transform:scaleX(0.9353);transform-origin:left;">DAD0000I</div>
<div class="t" style="left:402.25px;top:473.30px;font-size:17.90px;color:#000;font-weight:normal;font-family:'Liberation Sans', sans-serif;">水道業</div>
<div class="t" style="right:934.00px;top:473.59px;font-size:18.50px;color:#000;font-weight:normal;font-family:'Liberation Sans', sans-serif;">100.3</div>
<div class="t" style="right:1760.50px;top:503.59px;font-size:18.50px;color:#000;font-weight:normal;font-family:'Liberation Sans', sans-serif;transform:scaleX(1.0556);transform-origin:right;">2018/1/1</div>
<div class="t" style="left:143.00px;top:503.30px;font-size:17.90px;color:#000;font-weight:normal;font-family:'Liberation Sans', sans-serif;">原指数</div>
<div class="t" style="left:287.25px;top:503.59px;font-size:18.50px;color:#000;font-weight:normal;font-family:'Liberation Sans', sans-serif;transform:scaleX(0.9695);transform-origin:left;">DB00000I</div>
<div class="t" style="left:402.25px;top:503.30px;font-size:17.90px;color:#000;font-weight:normal;font-family:'Liberation Sans', sans-serif;">情報通信業</div>
<div class="t" style="right:934.00px;top:503.59px;font-size:18.50px;color:#000;font-weight:normal;font-family:'Liberation Sans', sans-serif;">90.8</div>
<div class="t" style="right:1760.50px;top:533.59px;font-size:18.50px;color:#000;font-weight:normal;font-family:'Liberation Sans', sans-serif;transform:scaleX(1.0556);transform-origin:right;">2018/1/1</div>
<div class="t" style="left:143.00px;top:533.30px;font-size:17.90px;color:#000;font-weight:normal;font-family:'Liberation Sans', sans-serif;">季節調整済指数</div>
<div class="t" style="left:287.25px;top:533.59px;font-size:18.50px;color:#000;font-weight:normal;font-family:'Liberation Sans', sans-serif;transform:scaleX(0.9695);transform-origin:left;">DB00000I</div>
<div class="t" style="left:402.25px;top:533.30px;font-size:17.90px;color:#000;font-weight:normal;font-family:'Liberation Sans', sans-serif;">情報通信業</div>
<div class="t" style="right:934.00px;top:533.59px;font-size:18.50px;color:#000;font-weight:normal;font-family:'Liberation Sans', sans-serif;">97.5</div>
<div class="t" style="right:1760.50px;top:563.59px;font-size:18.50px;color:#000;font-weight:normal;font-family:'Liberation Sans', sans-serif;transform:scaleX(1.0556);transform-origin:right;">2018/1/1</div>
<div class="t" style="left:143.00px;top:563.30px;font-size:17.90px;color:#000;font-weight:normal;font-family:'Liberation Sans', sans-serif;">原指数</div>
<div class="t" style="left:287.25px;top:563.59px;font-size:18.50px;color:#000;font-weight:normal;font-family:'Liberation Sans', sans-serif;transform:scaleX(0.9464);transform-origin:left;">DBA0000I</div>
<div class="t" style="left:402.25px;top:563.30px;font-size:17.90px;color:#000;font-weight:normal;font-family:'Liberation Sans', sans-serif;">通信業</div>
<div class="t" style="right:934.00px;top:563.59px;font-size:18.50px;color:#000;font-weight:normal;font-family:'Liberation Sans', sans-serif;">100.7</div>
<div class="t" style="right:1760.50px;top:593.59px;font-size:18.50px;color:#000;font-weight:normal;font-family:'Liberation Sans', sans-serif;transform:scaleX(1.0556);transform-origin:right;">2018/1/1</div>
<div class="t" style="left:143.00px;top:593.30px;font-size:17.90px;color:#000;font-weight:normal;font-family:'Liberation Sans', sans-serif;">季節調整済指数</div>
<div class="t" style="left:287.25px;top:593.59px;font-size:18.50px;color:#000;font-weight:normal;font-family:'Liberation Sans', sans-serif;transform:scaleX(0.9464);transform-origin:left;">DBA0000I</div>
<div class="t" style="left:402.25px;top:593.30px;font-size:17.90px;color:#000;font-weight:normal;font-family:'Liberation Sans', sans-serif;">通信業</div>
<div class="t" style="right:934.00px;top:593.59px;font-size:18.50px;color:#000;font-weight:normal;font-family:'Liberation Sans', sans-serif;">99</div>
<div class="t" style="right:1760.50px;top:623.59px;font-size:18.50px;color:#000;font-weight:normal;font-family:'Liberation Sans', sans-serif;transform:scaleX(1.0556);transform-origin:right;">2018/1/1</div>
<div class="t" style="left:143.00px;top:623.30px;font-size:17.90px;color:#000;font-weight:normal;font-family:'Liberation Sans', sans-serif;">原指数</div>
<div class="t" style="left:287.25px;top:623.59px;font-size:18.50px;color:#000;font-weight:normal;font-family:'Liberation Sans', sans-serif;transform:scaleX(0.9464);transform-origin:left;">DBB0000I</div>
<div class="t" style="left:402.25px;top:623.30px;font-size:17.90px;color:#000;font-weight:normal;font-family:'Liberation Sans', sans-serif;">放送業</div>
<div class="t" style="right:934.00px;top:623.59px;font-size:18.50px;color:#000;font-weight:normal;font-family:'Liberation Sans', sans-serif;">106.1</div>
<div class="t" style="right:1760.50px;top:653.59px;font-size:18.50px;color:#000;font-weight:normal;font-family:'Liberation Sans', sans-serif;transform:scaleX(1.0556);transform-origin:right;">2018/1/1</div>
<div class="t" style="left:143.00px;top:653.30px;font-size:17.90px;color:#000;font-weight:normal;font-family:'Liberation Sans', sans-serif;">季節調整済指数</div>
<div class="t" style="left:287.25px;top:653.59px;font-size:18.50px;color:#000;font-weight:normal;font-family:'Liberation Sans', sans-serif;transform:scaleX(0.9464);transform-origin:left;">DBB0000I</div>
<div class="t" style="left:402.25px;top:653.30px;font-size:17.90px;color:#000;font-weight:normal;font-family:'Liberation Sans', sans-serif;">放送業</div>
<div class="t" style="right:934.00px;top:653.59px;font-size:18.50px;color:#000;font-weight:normal;font-family:'Liberation Sans', sans-serif;">105.7</div>
<div class="t" style="right:1760.50px;top:683.59px;font-size:18.50px;color:#000;font-weight:normal;font-family:'Liberation Sans', sans-serif;transform:scaleX(1.0556);transform-origin:right;">2018/1/1</div>
<div class="t" style="left:143.00px;top:683.30px;font-size:17.90px;color:#000;font-weight:normal;font-family:'Liberation Sans', sans-serif;">原指数</div>
<div class="t" style="left:287.25px;top:683.59px;font-size:18.50px;color:#000;font-weight:normal;font-family:'Liberation Sans', sans-serif;transform:scaleX(0.9353);transform-origin:left;">DBC0000I</div>
<div class="t" style="left:402.25px;top:683.30px;font-size:17.90px;color:#000;font-weight:normal;font-family:'Liberation Sans', sans-serif;">情報サービス業</div>
<div class="t" style="right:934.00px;top:683.59px;font-size:18.50px;color:#000;font-weight:normal;font-family:'Liberation Sans', sans-serif;">85.7</div>
<div class="t" style="right:1760.50px;top:713.59px;font-size:18.50px;color:#000;font-weight:normal;font-family:'Liberation Sans', sans-serif;transform:scaleX(1.0556);transform-origin:right;">2018/1/1</div>
<div class="t" style="left:143.00px;top:713.30px;font-size:17.90px;color:#000;font-weight:normal;font-family:'Liberation Sans', sans-serif;">季節調整済指数</div>
<div class="t" style="left:287.25px;top:713.59px;font-size:18.50px;color:#000;font-weight:normal;font-family:'Liberation Sans', sans-serif;transform:scaleX(0.9353);transform-origin:left;">DBC0000I</div>
<div class="t" style="left:402.25px;top:713.30px;font-size:17.90px;color:#000;font-weight:normal;font-family:'Liberation Sans', sans-serif;">情報サービス業</div>
<div class="t" style="right:934.00px;top:713.59px;font-size:18.50px;color:#000;font-weight:normal;font-family:'Liberation Sans', sans-serif;">96.9</div>
<div class="t" style="right:1760.50px;top:743.59px;font-size:18.50px;color:#000;font-weight:normal;font-family:'Liberation Sans', sans-serif;transform:scaleX(1.0556);transform-origin:right;">2018/1/1</div>
<div class="t" style="left:143.00px;top:743.30px;font-size:17.90px;color:#000;font-weight:normal;font-family:'Liberation Sans', sans-serif;">原指数</div>
<div class="t" style="left:287.25px;top:743.59px;font-size:18.50px;color:#000;font-weight:normal;font-family:'Liberation Sans', sans-serif;transform:scaleX(0.9138);transform-origin:left;">DBCA000I</div>
<div class="t" style="left:402.25px;top:743.30px;font-size:17.90px;color:#000;font-weight:normal;font-family:'Liberation Sans', sans-serif;">ソフトウェア業</div>
<div class="t" style="right:934.00px;top:743.59px;font-size:18.50px;color:#000;font-weight:normal;font-family:'Liberation Sans', sans-serif;">86.2</div>
<div class="t" style="right:1760.50px;top:773.59px;font-size:18.50px;color:#000;font-weight:normal;font-family:'Liberation Sans', sans-serif;transform:scaleX(1.0556);transform-origin:right;">2018/1/1</div>
<div class="t" style="left:143.00px;top:773.30px;font-size:17.90px;color:#000;font-weight:normal;font-family:'Liberation Sans', sans-serif;">季節調整済指数</div>
<div class="t" style="left:287.25px;top:773.59px;font-size:18.50px;color:#000;font-weight:normal;font-family:'Liberation Sans', sans-serif;transform:scaleX(0.9138);transform-origin:left;">DBCA000I</div>
<div class="t" style="left:402.25px;top:773.30px;font-size:17.90px;color:#000;font-weight:normal;font-family:'Liberation Sans', sans-serif;">ソフトウェア業</div>
<div class="t" style="right:934.00px;top:773.59px;font-size:18.50px;color:#000;font-weight:normal;font-family:'Liberation Sans', sans-serif;">99.1</div>
<div class="t" style="right:1760.50px;top:803.59px;font-size:18.50px;color:#000;font-weight:normal;font-family:'Liberation Sans', sans-serif;transform:scaleX(1.0556);transform-origin:right;">2018/1/1</div>
<div class="t" style="left:143.00px;top:803.30px;font-size:17.90px;color:#000;font-weight:normal;font-family:'Liberation Sans', sans-serif;">原指数</div>
<div class="t" style="left:287.25px;top:803.59px;font-size:18.50px;color:#000;font-weight:normal;font-family:'Liberation Sans', sans-serif;transform:scaleX(0.9138);transform-origin:left;">DBCB000I</div>
<div class="t" style="left:402.25px;top:803.30px;font-size:17.90px;color:#000;font-weight:normal;font-family:'Liberation Sans', sans-serif;">情報処理・提供サービス業</div>
<div class="t" style="right:934.00px;top:803.59px;font-size:18.50px;color:#000;font-weight:normal;font-family:'Liberation Sans', sans-serif;">84.7</div>
<div class="t" style="right:1760.50px;top:833.59px;font-size:18.50px;color:#000;font-weight:normal;font-family:'Liberation Sans', sans-serif;transform:scaleX(1.0556);transform-origin:right;">2018/1/1</div>
<div class="t" style="left:143.00px;top:833.30px;font-size:17.90px;color:#000;font-weight:normal;font-family:'Liberation Sans', sans-serif;">季節調整済指数</div>
<div class="t" style="left:287.25px;top:833.59px;font-size:18.50px;color:#000;font-weight:normal;font-family:'Liberation Sans', sans-serif;transform:scaleX(0.9138);transform-origin:left;">DBCB000I</div>
<div class="t" style="left:402.25px;top:833.30px;font-size:17.90px;color:#000;font-weight:normal;font-family:'Liberation Sans', sans-serif;">情報処理・提供サービス業</div>
<div class="t" style="right:934.00px;top:833.59px;font-size:18.50px;color:#000;font-weight:normal;font-family:'Liberation Sans', sans-serif;">93</div>
<div class="t" style="right:1760.50px;top:863.59px;font-size:18.50px;color:#000;font-weight:normal;font-family:'Liberation Sans', sans-serif;transform:scaleX(1.0556);transform-origin:right;">2018/1/1</div>
<div class="t" style="left:143.00px;top:863.30px;font-size:17.90px;color:#000;font-weight:normal;font-family:'Liberation Sans', sans-serif;">原指数</div>
<div class="t" style="left:287.25px;top:863.59px;font-size:18.50px;color:#000;font-weight:normal;font-family:'Liberation Sans', sans-serif;transform:scaleX(0.9353);transform-origin:left;">DBD0000I</div>
<div class="t" style="left:402.25px;top:863.30px;font-size:17.90px;color:#000;font-weight:normal;font-family:'Liberation Sans', sans-serif;">インターネット附随サービス業</div>
<div class="t" style="right:934.00px;top:863.59px;font-size:18.50px;color:#000;font-weight:normal;font-family:'Liberation Sans', sans-serif;">84.6</div>
<div class="t" style="right:1760.50px;top:893.59px;font-size:18.50px;color:#000;font-weight:normal;font-family:'Liberation Sans', sans-serif;transform:scaleX(1.0556);transform-origin:right;">2018/1/1</div>
<div class="t" style="left:143.00px;top:893.30px;font-size:17.90px;color:#000;font-weight:normal;font-family:'Liberation Sans', sans-serif;">季節調整済指数</div>
<div class="t" style="left:287.25px;top:893.59px;font-size:18.50px;color:#000;font-weight:normal;font-family:'Liberation Sans', sans-serif;transform:scaleX(0.9353);transform-origin:left;">DBD0000I</div>
<div class="t" style="left:402.25px;top:893.30px;font-size:17.90px;color:#000;font-weight:normal;font-family:'Liberation Sans', sans-serif;">インターネット附随サービス業</div>
<div class="t" style="right:934.00px;top:893.59px;font-size:18.50px;color:#000;font-weight:normal;font-family:'Liberation Sans', sans-serif;">85.8</div>
<div class="t" style="right:1760.50px;top:923.59px;font-size:18.50px;color:#000;font-weight:normal;font-family:'Liberation Sans', sans-serif;transform:scaleX(1.0556);transform-origin:right;">2018/1/1</div>
<div class="t" style="left:143.00px;top:923.30px;font-size:17.90px;color:#000;font-weight:normal;font-family:'Liberation Sans', sans-serif;">原指数</div>
<div class="t" style="left:287.25px;top:923.59px;font-size:18.50px;color:#000;font-weight:normal;font-family:'Liberation Sans', sans-serif;transform:scaleX(0.9464);transform-origin:left;">DBE0000I</div>
<div class="t" style="left:402.25px;top:923.30px;font-size:17.90px;color:#000;font-weight:normal;font-family:'Liberation Sans', sans-serif;">映像・音声・文字情報制作業</div>
<div class="t" style="right:934.00px;top:923.59px;font-size:18.50px;color:#000;font-weight:normal;font-family:'Liberation Sans', sans-serif;">92.1</div>
<div class="t" style="right:1760.50px;top:953.59px;font-size:18.50px;color:#000;font-weight:normal;font-family:'Liberation Sans', sans-serif;transform:scaleX(1.0556);transform-origin:right;">2018/1/1</div>
<div class="t" style="left:143.00px;top:953.30px;font-size:17.90px;color:#000;font-weight:normal;font-family:'Liberation Sans', sans-serif;">季節調整済指数</div>
<div class="t" style="left:287.25px;top:953.59px;font-size:18.50px;color:#000;font-weight:normal;font-family:'Liberation Sans', sans-serif;transform:scaleX(0.9464);transform-origin:left;">DBE0000I</div>
<div class="t" style="left:402.25px;top:953.30px;font-size:17.90px;color:#000;font-weight:normal;font-family:'Liberation Sans', sans-serif;">映像・音声・文字情報制作業</div>
<div class="t" style="right:934.00px;top:953.59px;font-size:18.50px;color:#000;font-weight:normal;font-family:'Liberation Sans', sans-serif;">101.4</div>
</div>
<div class="r" style="left:35px;top:126px;width:105px;height:64px;background:transparent;box-sizing:border-box;border:2px solid #0E6B38;"></div>
<div class="r" style="left:37px;top:128px;width:101px;height:60px;background:transparent;box-sizing:border-box;border:1px solid #fff;"></div>
<div class="r" style="left:135px;top:185px;width:6px;height:6px;background:#0E6B38;box-shadow:0 0 0 1px #fff;"></div>
<div class="r" style="left:0px;top:953px;width:1920px;height:42px;background:#E3E8F0;"></div>
<div class="r" style="left:134px;top:953px;width:75px;height:8px;background:#fff;"></div>
<div class="r" style="left:0px;top:953px;width:141px;height:42px;background:#E3E8F0;border-top-right-radius:6px;"></div>
<div class="r" style="left:202px;top:953px;width:1718px;height:42px;background:#E3E8F0;border-top-left-radius:6px;"></div>
<svg style="left:31px;top:965px" width="9" height="14" viewBox="0 0 9 14" fill="none" stroke="#808080" stroke-width="1.2"><path d="M8 1 L1.5 7 L8 13"/></svg>
<svg style="left:72px;top:965px" width="9" height="14" viewBox="0 0 9 14" fill="none" stroke="#808080" stroke-width="1.2"><path d="M1 1 L7.5 7 L1 13"/></svg>
<div class="r" style="left:141px;top:953px;width:61px;height:35px;background:#fff;border-radius:0 0 6px 6px;box-shadow:0 0.5px 0.5px rgba(0,0,0,0.12);"></div>
<div class="r" style="left:0px;top:953px;width:1894px;height:1px;background:#DCDCDC;"></div>
<div class="r" style="left:0px;top:993px;width:1920px;height:1px;background:#C8C8C8;"></div>
<div class="r" style="left:0px;top:994px;width:1920px;height:1px;background:#F8F8F8;"></div>
<div class="r" style="left:151px;top:983px;width:41px;height:2px;background:#107C41;border-radius:1px;"></div>
<div class="t" style="left:152.50px;top:969.59px;font-size:18.50px;color:#262626;font-weight:normal;font-family:'Liberation Sans', sans-serif;transform:scaleX(1.0139);transform-origin:left;">data</div>
<div class="r" style="left:207px;top:961px;width:1px;height:23px;background:#C8CCD2;"></div>
<div class="t" style="left:225.50px;top:972.76px;font-size:18.00px;color:#262626;font-weight:normal;font-family:'Liberation Sans', sans-serif;transform:scaleX(1.0789);transform-origin:left;">pivot</div>
<div class="r" style="left:284px;top:961px;width:1px;height:23px;background:#C8CCD2;"></div>
<svg style="left:337px;top:965px" width="14" height="14" viewBox="0 0 14 14" fill="none" stroke="#262626" stroke-width="1.3"><path d="M7 0 V14 M0 7 H14"/></svg>
<div class="r" style="left:1155px;top:967px;width:2.5px;height:2.5px;background:#222;"></div>
<div class="r" style="left:1155px;top:972px;width:2.5px;height:2.5px;background:#222;"></div>
<div class="r" style="left:1155px;top:977px;width:2.5px;height:2.5px;background:#222;"></div>
<div class="r" style="left:1176px;top:962px;width:721px;height:21px;background:#F4F4F4;border-radius:10.5px;"></div>
<svg style="left:1182px;top:967px" width="9" height="11" viewBox="0 0 9 11"><path d="M1.2 5.5 L8 1.2 V9.8 Z" fill="#707070" stroke="#707070" stroke-width="1.4" stroke-linejoin="round"/></svg>
<div class="r" style="left:1197px;top:967px;width:664px;height:11px;background:#707070;border-radius:5.5px;"></div>
<svg style="left:1882px;top:967px" width="9" height="11" viewBox="0 0 9 11"><path d="M7.8 5.5 L1 1.2 V9.8 Z" fill="#707070" stroke="#707070" stroke-width="1.4" stroke-linejoin="round"/></svg>
<div class="r" style="left:1894px;top:98px;width:26px;height:855px;background:#E3E8F0;"></div>
<div class="r" style="left:1894px;top:98px;width:1px;height:855px;background:#DEDEDE;"></div>
<div class="r" style="left:1897px;top:100px;width:21px;height:856px;background:#F4F4F4;border-radius:10px;"></div>
<svg style="left:1902px;top:104px" width="11" height="8" viewBox="0 0 11 8"><path d="M5.5 1.2 L9.8 7 H1.2 Z" fill="#707070" stroke="#707070" stroke-width="1.4" stroke-linejoin="round"/></svg>
<div class="r" style="left:1902px;top:119px;width:11px;height:21px;background:#707070;border-radius:5.5px;"></div>
<svg style="left:1902px;top:941px" width="11" height="8" viewBox="0 0 11 8"><path d="M5.5 7.3 L9.8 1.2 H1.2 Z" fill="#707070" stroke="#707070" stroke-width="1.4" stroke-linejoin="round"/></svg>
</body></html>
